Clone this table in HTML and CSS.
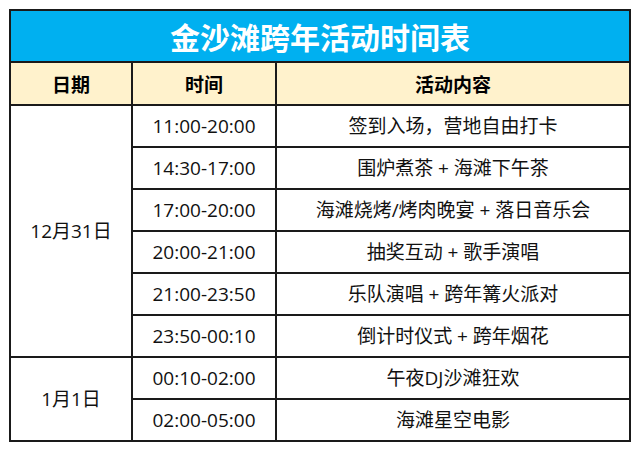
FILE: index.html
```html
<!DOCTYPE html>
<html lang="zh-CN">
<head>
<meta charset="utf-8">
<title>金沙滩跨年活动时间表</title>
<link rel="stylesheet" href="styles.css">
</head>
<body>
<table class="schedule">
  <colgroup>
    <col class="c-date">
    <col class="c-time">
    <col class="c-act">
  </colgroup>
  <thead>
    <tr class="title-row"><th colspan="3" class="title">金沙滩跨年活动时间表</th></tr>
    <tr class="head-row"><th>日期</th><th>时间</th><th>活动内容</th></tr>
  </thead>
  <tbody>
    <tr><td rowspan="6">12月31日</td><td>11:00-20:00</td><td>签到入场，营地自由打卡</td></tr>
    <tr><td>14:30-17:00</td><td>围炉煮茶 + 海滩下午茶</td></tr>
    <tr><td>17:00-20:00</td><td>海滩烧烤/烤肉晚宴 + 落日音乐会</td></tr>
    <tr><td>20:00-21:00</td><td>抽奖互动 + 歌手演唱</td></tr>
    <tr><td>21:00-23:50</td><td>乐队演唱 + 跨年篝火派对</td></tr>
    <tr><td>23:50-00:10</td><td>倒计时仪式 + 跨年烟花</td></tr>
    <tr><td rowspan="2">1月1日</td><td>00:10-02:00</td><td>午夜DJ沙滩狂欢</td></tr>
    <tr><td>02:00-05:00</td><td>海滩星空电影</td></tr>
  </tbody>
</table>
</body>
</html>
```

FILE: styles.css
```css
html, body {
  margin: 0;
  padding: 0;
  background: #ffffff;
}
body {
  padding: 9px 0 0 9px;
  font-family: "Open Sans", "Noto Sans CJK SC", sans-serif;
  color: #111;
}
.schedule {
  border-collapse: collapse;
  width: 622px;
  table-layout: fixed;
  border: 2px solid #2a2a2a;
}
.c-date { width: 122px; }
.c-time { width: 144px; }
.c-act { width: auto; }
.schedule th,
.schedule td {
  border: 2px solid #1a1a1a;
  text-align: center;
  vertical-align: middle;
  padding: 0;
  font-size: 19px;
  line-height: 1;
}
.title-row th.title {
  height: 50px;
  background: #00b0f0;
  color: #ffffff;
  font-size: 30px;
  font-weight: 700;
  font-family: "Noto Sans CJK SC", sans-serif;
  border-bottom: 2px solid #1a1a1a;
}
.head-row th {
  height: 41px;
  background: #fff2cc;
  font-weight: 700;
  font-family: "Noto Sans CJK SC", sans-serif;
  color: #000;
}
.schedule tbody td {
  height: 40px;
}
```
